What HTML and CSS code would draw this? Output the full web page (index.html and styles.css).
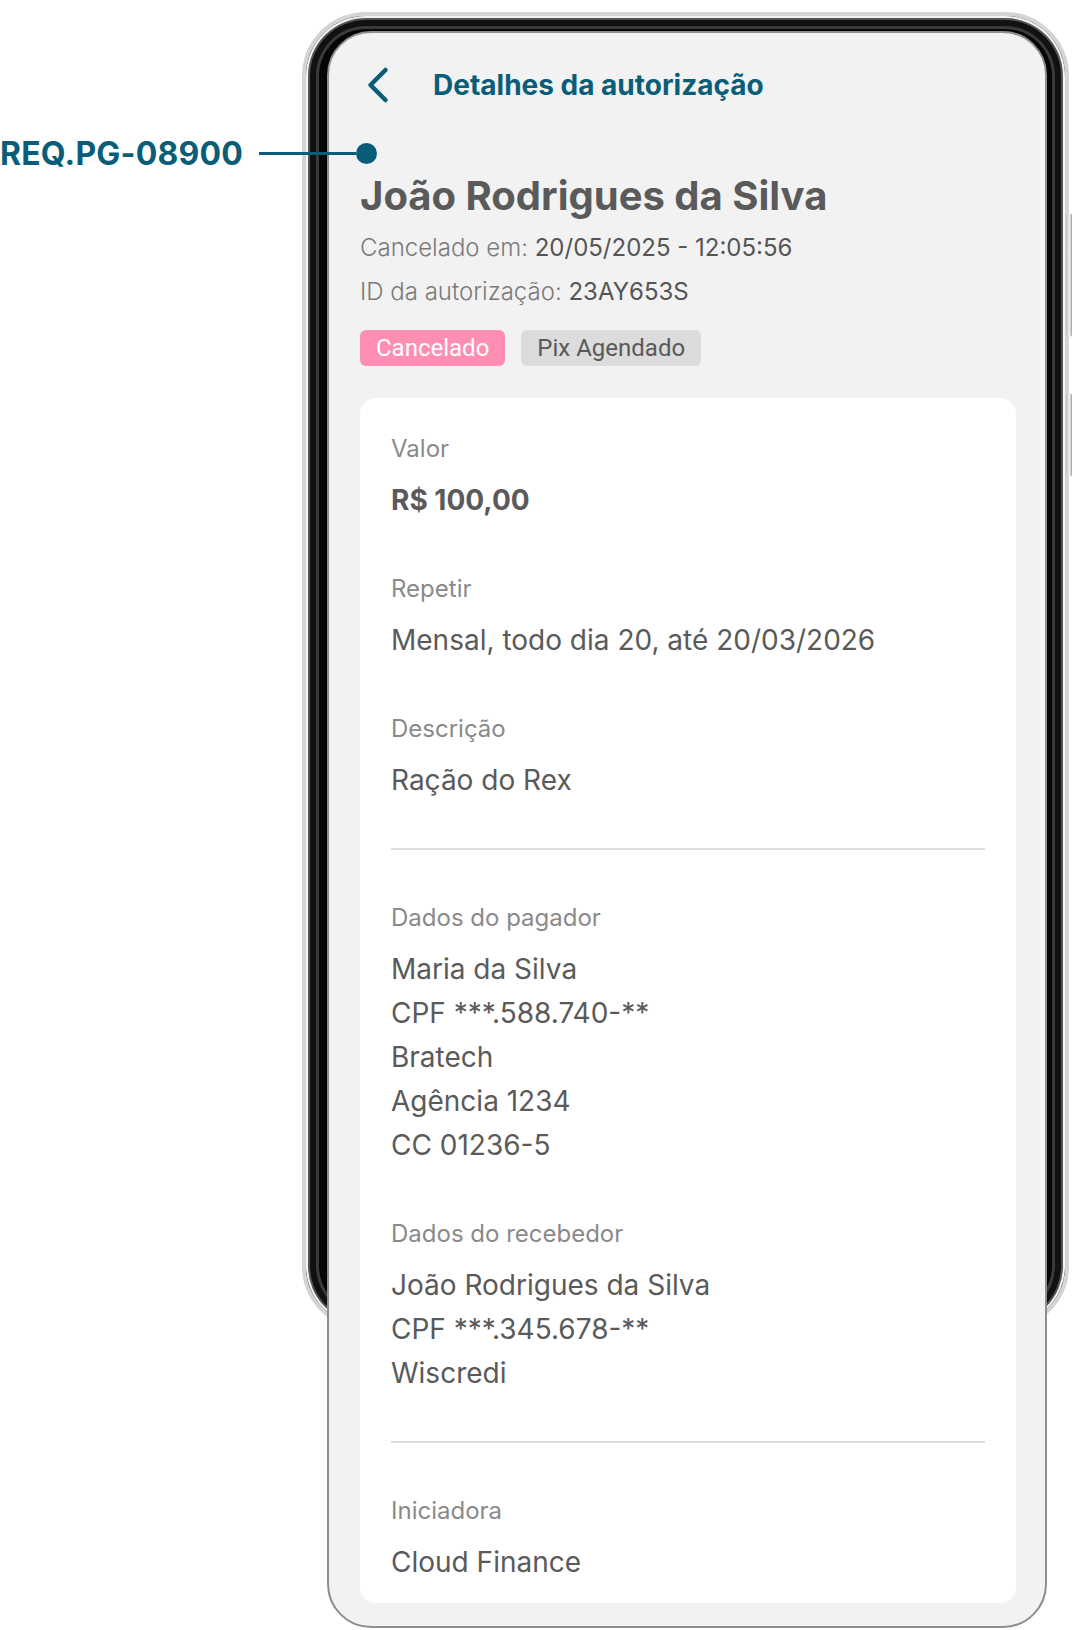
FILE: index.html
```html
<!DOCTYPE html>
<html lang="pt-BR">
<head>
    <meta charset="UTF-8" />
    <link rel="stylesheet" href="styles.css">
</head>
<body>
    <div class="stage">
        <div class="frame"></div>
        <div class="side-btn btn-1"></div>
        <div class="side-btn btn-2"></div>

        <div class="tag">
            <span class="tag-text">REQ.PG-08900</span>
            <span class="tag-line"></span>
            <span class="tag-dot"></span>
        </div>

        <div class="screen">
            <div class="header">
                <svg class="back" width="28" height="40" viewBox="0 0 28 40">
                    <path d="M21.5 5 L6.5 20 L21.5 35" fill="none" stroke="#0a5d79" stroke-width="4.5" stroke-linecap="round" stroke-linejoin="round"/>
                </svg>
                <h1>Detalhes da autorização</h1>
            </div>

            <h2 class="name">João Rodrigues da Silva</h2>
            <p class="meta"><span class="meta-label">Cancelado em:</span> 20/05/2025 - 12:05:56</p>
            <p class="meta"><span class="meta-label">ID da autorização:</span> 23AY653S</p>

            <div class="pills">
                <span class="pill pill-cancel">Cancelado</span>
                <span class="pill pill-type">Pix Agendado</span>
            </div>

            <div class="card">
                <div class="field">
                    <div class="label">Valor</div>
                    <div class="value strong">R$ 100,00</div>
                </div>
                <div class="field">
                    <div class="label">Repetir</div>
                    <div class="value">Mensal, todo dia 20, até 20/03/2026</div>
                </div>
                <div class="field">
                    <div class="label">Descrição</div>
                    <div class="value">Ração do Rex</div>
                </div>

                <hr class="divider">

                <div class="field">
                    <div class="label">Dados do pagador</div>
                    <div class="value">Maria da Silva</div>
                    <div class="value">CPF ***.588.740-**</div>
                    <div class="value">Bratech</div>
                    <div class="value">Agência 1234</div>
                    <div class="value">CC 01236-5</div>
                </div>
                <div class="field">
                    <div class="label">Dados do recebedor</div>
                    <div class="value">João Rodrigues da Silva</div>
                    <div class="value">CPF ***.345.678-**</div>
                    <div class="value">Wiscredi</div>
                </div>

                <hr class="divider">

                <div class="field">
                    <div class="label">Iniciadora</div>
                    <div class="value">Cloud Finance</div>
                </div>
            </div>
        </div>
    </div>
</body>
</html>
```

FILE: styles.css
```css
body {
    margin: 0;
    background-color: #ffffff;
    font-family: Inter, "Noto Sans", sans-serif;
    color: #555555;
}
.stage {
    position: relative;
    width: 1074px;
    height: 1630px;
    overflow: hidden;
}

/* phone body behind the screen */
.frame {
    position: absolute;
    left: 302px;
    top: 12px;
    width: 767px;
    height: 1318px;
    box-sizing: border-box;
    border-radius: 64px;
    border: 4px solid #d4d4d4;
    background-color: #050505;
    box-shadow: inset 0 0 0 2px #f4f4f4, inset 0 0 0 4px #555555, inset 0 0 0 10px #111111, inset 0 0 0 13px #3a3a3a;
}
.side-btn {
    position: absolute;
    left: 1066px;
    width: 6px;
    border-radius: 3px;
    background: linear-gradient(to right, #bdbdbd, #f2f2f2 60%, #9a9a9a);
}
.btn-1 { top: 213px; height: 124px; }
.btn-2 { top: 393px; height: 84px; }

/* annotation */
.tag {
    position: absolute;
    left: 0;
    top: 130px;
    z-index: 2;
    display: flex;
    align-items: center;
    height: 46px;
}
.tag-text {
    font-size: 32px;
    font-weight: 700;
    color: #0a5d79;
    letter-spacing: 0.2px;
}
.tag-line {
    width: 97px;
    height: 3px;
    margin-left: 16px;
    background-color: #0a5d79;
}
.tag-dot {
    width: 21px;
    height: 21px;
    border-radius: 50%;
    background-color: #0a5d79;
}

/* screen */
.screen {
    position: relative;
    z-index: 1;
    margin: 31px 0 0 327px;
    width: 720px;
    height: 1597px;
    box-sizing: border-box;
    padding: 32px 29px 0 31px;
    background-color: #f2f2f2;
    border: 2px solid #8e8e8e;
    border-radius: 44px;
}
.header {
    display: flex;
    align-items: center;
    height: 40px;
}
.back {
    margin-left: 4px;
    flex-shrink: 0;
}
h1 {
    margin: 0 0 0 41px;
    font-size: 28px;
    font-weight: 700;
    color: #0a5d79;
}
.name {
    margin: 69px 0 8px 0;
    font-size: 40px;
    line-height: 44px;
    font-weight: 700;
    color: #5a5a5a;
}
.meta {
    margin: 0;
    font-size: 24px;
    line-height: 44px;
    color: #555555;
}
.meta-label {
    font-weight: 300;
    color: #7a7a7a;
}
.pills {
    display: flex;
    gap: 16px;
    margin-top: 16px;
}
.pill {
    display: inline-flex;
    align-items: center;
    height: 36px;
    padding: 0 16px;
    border-radius: 6px;
    font-family: Roboto, sans-serif;
    font-size: 24px;
}
.pill-cancel {
    background-color: #ff8fb2;
    color: #ffffff;
}
.pill-type {
    background-color: #dcdcdc;
    color: #595959;
}

.card {
    margin-top: 32px;
    padding: 36px 31px 19px 31px;
    background-color: #ffffff;
    border-radius: 16px;
}
.field + .field {
    margin-top: 52px;
}
.label {
    font-size: 24px;
    line-height: 30px;
    color: #8a8a8a;
    margin-bottom: 14px;
}
.value {
    font-size: 28px;
    line-height: 44px;
    color: #5a5a5a;
}
.value.strong {
    font-weight: 700;
}
.divider {
    border: none;
    height: 2px;
    background-color: #dedede;
    margin: 46px 0 53px 0;
}
```
